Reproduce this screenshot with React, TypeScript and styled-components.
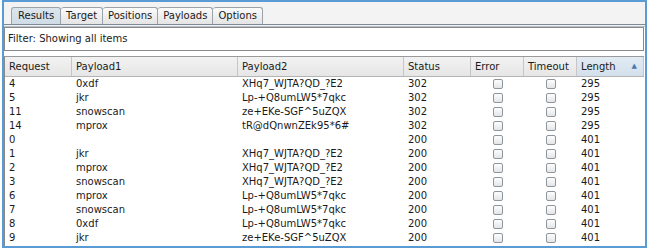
import * as React from 'react';
import styled, { createGlobalStyle } from 'styled-components';

const GlobalStyle = createGlobalStyle`
  html, body {
    margin: 0;
    padding: 0;
    background: #ffffff;
  }
  body {
    font-family: 'DejaVu Sans', 'Liberation Sans', sans-serif;
    font-size: 10px;
    color: #1a1a1a;
  }
`;

type ResultRow = {
  request: string;
  payload1: string;
  payload2: string;
  status: string;
  length: string;
};

const rows: ResultRow[] = [
  { request: '4', payload1: '0xdf', payload2: 'XHq7_WJTA?QD_?E2', status: '302', length: '295' },
  { request: '5', payload1: 'jkr', payload2: 'Lp-+Q8umLW5*7qkc', status: '302', length: '295' },
  { request: '11', payload1: 'snowscan', payload2: 'ze+EKe-SGF^5uZQX', status: '302', length: '295' },
  { request: '14', payload1: 'mprox', payload2: 'tR@dQnwnZEk95*6#', status: '302', length: '295' },
  { request: '0', payload1: '', payload2: '', status: '200', length: '401' },
  { request: '1', payload1: 'jkr', payload2: 'XHq7_WJTA?QD_?E2', status: '200', length: '401' },
  { request: '2', payload1: 'mprox', payload2: 'XHq7_WJTA?QD_?E2', status: '200', length: '401' },
  { request: '3', payload1: 'snowscan', payload2: 'XHq7_WJTA?QD_?E2', status: '200', length: '401' },
  { request: '6', payload1: 'mprox', payload2: 'Lp-+Q8umLW5*7qkc', status: '200', length: '401' },
  { request: '7', payload1: 'snowscan', payload2: 'Lp-+Q8umLW5*7qkc', status: '200', length: '401' },
  { request: '8', payload1: '0xdf', payload2: 'Lp-+Q8umLW5*7qkc', status: '200', length: '401' },
  { request: '9', payload1: 'jkr', payload2: 'ze+EKe-SGF^5uZQX', status: '200', length: '401' },
];

const tabs = ['Results', 'Target', 'Positions', 'Payloads', 'Options'];

// Request, Payload1, Payload2, Status, Error, Timeout, Length
const COLS = '67px 166px 166px 67px 53px 53px 1fr';

export default function App() {
  return (
    <>
      <GlobalStyle />
      <Frame>
        <TabStrip>
          {tabs.map((t, i) => (
            <Tab key={t} $active={i === 0}>
              {t}
            </Tab>
          ))}
        </TabStrip>
        <Panel>
          <FilterBar>Filter: Showing all items</FilterBar>
          <Table>
            <HeaderRow>
              <HeadCell>Request</HeadCell>
              <HeadCell>Payload1</HeadCell>
              <HeadCell>Payload2</HeadCell>
              <HeadCell>Status</HeadCell>
              <HeadCell>Error</HeadCell>
              <HeadCell>Timeout</HeadCell>
              <HeadCell $sorted>
                Length
                <SortArrow>▲</SortArrow>
              </HeadCell>
            </HeaderRow>
            {rows.map((r) => (
              <Row key={r.request}>
                <Cell>{r.request}</Cell>
                <Cell>{r.payload1}</Cell>
                <Cell>{r.payload2}</Cell>
                <Cell>{r.status}</Cell>
                <CheckCell>
                  <Checkbox />
                </CheckCell>
                <CheckCell>
                  <Checkbox />
                </CheckCell>
                <Cell>{r.length}</Cell>
              </Row>
            ))}
          </Table>
        </Panel>
      </Frame>
    </>
  );
}

const Frame = styled.div`
  box-sizing: border-box;
  width: 645px;
  height: 248px;
  margin-left: 2px;
  border: 2px solid #5b9bd5;
  background: #f3f3f3;
  display: flex;
  flex-direction: column;
  overflow: hidden;
`;

const TabStrip = styled.div`
  display: flex;
  align-items: flex-end;
  height: 22px;
  padding-left: 7px;
  border-bottom: 1px solid #7d8a96;
`;

const Tab = styled.div<{ $active?: boolean }>`
  box-sizing: border-box;
  height: 17px;
  padding: 0 ${(p) => (p.$active ? '6px' : '5px')};
  line-height: 16px;
  border: 1px solid #9aa3ab;
  border-bottom: none;
  border-left-width: ${(p) => (p.$active ? '1px' : '0')};
  border-radius: 3px 3px 0 0;
  background: ${(p) =>
    p.$active
      ? 'linear-gradient(#dbe5ee, #cfdbe6)'
      : 'linear-gradient(#fbfbfb, #e4e4e4)'};
`;

const Panel = styled.div`
  flex: 1;
  display: flex;
  flex-direction: column;
  min-height: 0;
  padding: 1px 1px 0 0;
  background: #ffffff;
  border-top: 1px solid #f3f3f3;
  box-shadow: inset 0 1px 0 #b8c0c8;
`;

const FilterBar = styled.div`
  box-sizing: border-box;
  height: 24px;
  padding-left: 3px;
  line-height: 22px;
  border: 1px solid #8a8a8a;
`;

const Table = styled.div`
  flex: 1;
  margin-top: 5px;
  border-left: 1px solid #8a8a8a;
  border-top: 1px solid #9a9a9a;
`;

const HeaderRow = styled.div`
  display: grid;
  grid-template-columns: ${COLS};
  height: 19px;
  background: linear-gradient(#f2f2f2, #e6e6e6);
  border-bottom: 1px solid #b4b4b4;
`;

const HeadCell = styled.div<{ $sorted?: boolean }>`
  position: relative;
  padding-left: 4px;
  line-height: 19px;
  white-space: nowrap;
  border-right: 1px solid #c6c6c6;
  background: ${(p) => (p.$sorted ? 'linear-gradient(#e2ebf4, #d3e0ec)' : 'transparent')};
`;

const SortArrow = styled.span`
  position: absolute;
  right: 6px;
  top: 0;
  font-size: 7px;
  color: #4a78a8;
`;

const Row = styled.div`
  display: grid;
  grid-template-columns: ${COLS};
  height: 14px;
  line-height: 14px;
`;

const Cell = styled.div`
  padding-left: 4px;
  white-space: nowrap;
  overflow: hidden;
`;

const CheckCell = styled.div`
  display: flex;
  align-items: center;
  justify-content: center;
`;

const Checkbox = styled.span`
  box-sizing: border-box;
  width: 10px;
  height: 10px;
  border: 1px solid #8e959c;
  border-radius: 2px;
  background: linear-gradient(#fdfdfd, #e3e5e8);
`;
